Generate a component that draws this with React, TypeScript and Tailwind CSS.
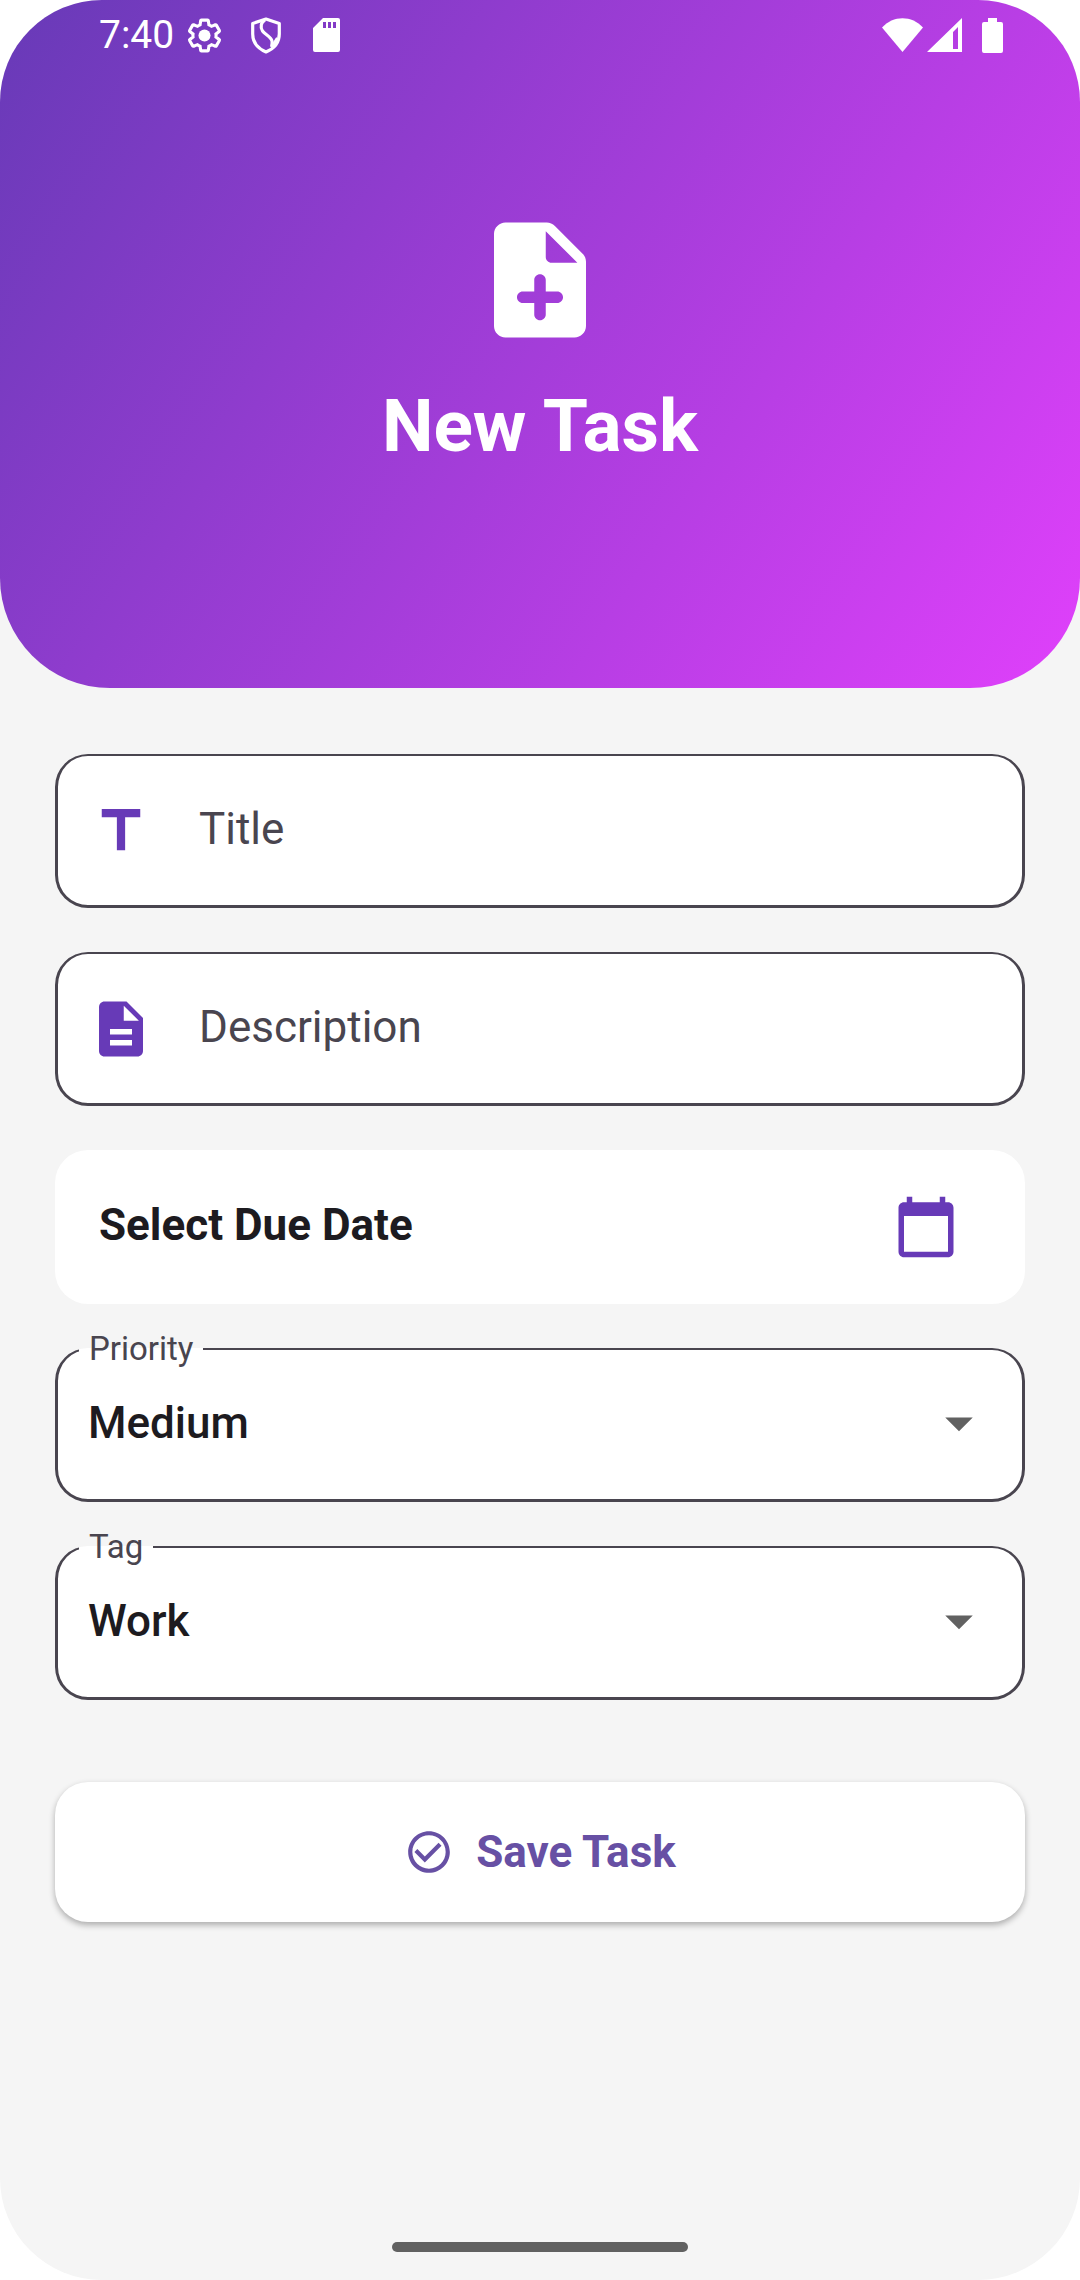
import { useState } from "react";
import type { ReactNode } from "react";

type IconProps = { path: string; className: string };

function Icon({ path, className }: IconProps) {
  return (
    <svg viewBox="0 0 24 24" className={className} fill="currentColor" aria-hidden="true">
      <path d={path} />
    </svg>
  );
}

const icons = {
  noteAdd:
    "M14.59 2.59c-.38-.38-.89-.59-1.42-.59H6c-1.1 0-2 .9-2 2v16c0 1.1.89 2 1.99 2H18c1.1 0 2-.9 2-2V8.83c0-.53-.21-1.04-.59-1.41l-4.82-4.83zM15 16h-2v2c0 .55-.45 1-1 1s-1-.45-1-1v-2H9c-.55 0-1-.45-1-1s.45-1 1-1h2v-2c0-.55.45-1 1-1s1 .45 1 1v2h2c.55 0 1 .45 1 1s-.45 1-1 1zm-2-8V3.5L18.5 9H14c-.55 0-1-.45-1-1z",
  title: "M5 4v3h5.5v12h3V7H19V4z",
  description:
    "M14 2H6c-1.1 0-1.99.9-1.99 2L4 20c0 1.1.89 2 1.99 2H18c1.1 0 2-.9 2-2V8l-6-6zm2 16H8v-2h8v2zm0-4H8v-2h8v2zm-3-5V3.5L18.5 9H13z",
  calendar:
    "M20 3h-1V1h-2v2H7V1H5v2H4c-1.1 0-2 .9-2 2v16c0 1.1.9 2 2 2h16c1.1 0 2-.9 2-2V5c0-1.1-.9-2-2-2zm0 18H4V8h16v13z",
  dropDown: "M7 10l5 5 5-5z",
  check:
    "M16.59 7.58L10 14.17l-3.59-3.58L5 12l5 5 8-8zM12 2C6.48 2 2 6.48 2 12s4.48 10 10 10 10-4.48 10-10S17.52 2 12 2zm0 18c-4.42 0-8-3.58-8-8s3.58-8 8-8 8 3.58 8 8-3.58 8-8 8z",
  gear:
    "M19.43 12.98c.04-.32.07-.64.07-.98s-.03-.66-.07-.98l2.11-1.65c.19-.15.24-.42.12-.64l-2-3.46c-.09-.16-.26-.25-.44-.25-.06 0-.12.01-.17.03l-2.49 1c-.52-.4-1.08-.73-1.69-.98l-.38-2.65C14.46 2.18 14.25 2 14 2h-4c-.25 0-.46.18-.49.42l-.38 2.65c-.61.25-1.17.59-1.69.98l-2.49-1c-.06-.02-.12-.03-.18-.03-.17 0-.34.09-.43.25l-2 3.46c-.13.22-.07.49.12.64l2.11 1.65c-.04.32-.07.65-.07.98s.03.66.07.98l-2.11 1.65c-.19.15-.24.42-.12.64l2 3.46c.09.16.26.25.44.25.06 0 .12-.01.17-.03l2.49-1c.52.4 1.08.73 1.69.98l.38 2.65c.03.24.24.42.49.42h4c.25 0 .46-.18.49-.42l.38-2.65c.61-.25 1.17-.59 1.69-.98l2.49 1c.06.02.12.03.18.03.17 0 .34-.09.43-.25l2-3.46c.12-.22.07-.49-.12-.64l-2.11-1.65z",
};

function StatusBar() {
  return (
    <div className="flex h-[70px] items-center justify-between pr-[77px] pl-[99px]">
      <div className="flex items-center">
        <span className="text-[39px] leading-[48px]">7:40</span>
        <svg viewBox="0 0 24 24" className="ml-3 size-[37px] overflow-visible" aria-hidden="true">
          <path d={icons.gear} fill="none" stroke="currentColor" strokeWidth="2" />
          <circle cx="12" cy="12" r="3.9" fill="currentColor" />
        </svg>
        <svg viewBox="0 0 30 37" className="ml-7 h-[37px] w-[30px]" fill="none" stroke="currentColor" strokeWidth="3.2" strokeLinejoin="round" aria-hidden="true">
          <path d="M15 2 28.300 6.500V17C28.300 26 22 32 15 35 8 32 1.700 26 1.700 17V6.500Z" />
          <path d="M14 3C10 5 9 10 11.500 14 14 17.500 20 19.500 21 24 21.500 26.500 21 28 20.500 30" />
          <path d="M26.500 21 21.500 29" />
        </svg>
        <svg viewBox="0 0 27 34" className="ml-8 h-[34px] w-[27px]" fill="currentColor" fillRule="evenodd" aria-hidden="true">
          <path d="M10 0H25a2 2 0 0 1 2 2V32a2 2 0 0 1-2 2H2a2 2 0 0 1-2-2V10ZM10 4v6h3V4ZM15 4v6h3V4ZM20 4v6h3V4Z" />
        </svg>
      </div>
      <div className="flex items-center">
        <svg viewBox="0 0 41 34" className="h-[34px] w-[41px]" fill="currentColor" aria-hidden="true">
          <path d="M0 9.500C11 -3 30 -3 41 9.500L20.500 34Z" />
        </svg>
        <svg viewBox="0 0 35 34" className="ml-1 h-[34px] w-[35px]" fill="currentColor" fillRule="evenodd" aria-hidden="true">
          <path d="M35 0V34H0ZM31 9 26 14V31H31Z" />
        </svg>
        <svg viewBox="0 0 21 35" className="ml-5 h-[35px] w-[21px]" fill="currentColor" aria-hidden="true">
          <path d="M6 0h9v4h4a2 2 0 0 1 2 2V33a2 2 0 0 1-2 2H2a2 2 0 0 1-2-2V6a2 2 0 0 1 2-2H6Z" />
        </svg>
      </div>
    </div>
  );
}

function TextField({ id, label, icon }: { id: string; label: string; icon: string }) {
  return (
    <div className="flex h-[154px] items-center gap-[45px] rounded-[33px] border-[3px] border-t-2 border-[#49454f] bg-white px-[30px]">
      <Icon path={icon} className="size-[66px] shrink-0 text-[#673ab7]" />
      <div className="grid flex-1 items-center pb-1 text-[44px] leading-[52px]">
        <input
          id={id}
          type="text"
          placeholder=" "
          className="peer col-start-1 row-start-1 w-full min-w-0 bg-transparent text-[#1d1b20] outline-none"
        />
        <label
          htmlFor={id}
          className="invisible col-start-1 row-start-1 cursor-text text-[#49454f] peer-placeholder-shown:visible"
        >
          {label}
        </label>
      </div>
    </div>
  );
}

type SelectFieldProps = {
  id: string;
  label: string;
  value: string;
  onChange: (value: string) => void;
  children: ReactNode;
};

function SelectField({ id, label, value, onChange, children }: SelectFieldProps) {
  return (
    <fieldset className="relative -mt-[18px] h-[172px] min-w-0 rounded-[33px] border-[3px] border-t-2 border-[#49454f] bg-white">
      <legend className="ml-[21px] px-[10px] text-[33px] leading-[38px] text-[#49454f]">
        <label htmlFor={id}>{label}</label>
      </legend>
      <select
        id={id}
        value={value}
        onChange={(event) => onChange(event.target.value)}
        className="h-[110px] w-full appearance-none bg-transparent pr-[96px] pl-[30px] text-[44px] font-medium text-[#1d1b20] outline-none"
      >
        {children}
      </select>
      <Icon
        path={icons.dropDown}
        className="pointer-events-none absolute right-[30px] bottom-[22px] size-[66px] text-[#616161]"
      />
    </fieldset>
  );
}

export default function App() {
  const [priority, setPriority] = useState("Medium");
  const [tag, setTag] = useState("Work");

  return (
    <div className="bg-white font-['Roboto',sans-serif]">
      <div className="flex min-h-screen flex-col overflow-hidden rounded-[102px] bg-[#f5f5f5]">
        <header className="rounded-b-[110px] bg-[linear-gradient(122.5deg,#673ab7,#e040fb)] pb-[220px] text-white">
          <StatusBar />
          <div className="flex flex-col items-center pt-[141px]">
            <Icon path={icons.noteAdd} className="size-[138px]" />
            <h1 className="mt-[35px] text-[73px] leading-[84px] font-bold">New Task</h1>
          </div>
        </header>

        <main className="flex-1 px-[55px] pt-[66px]">
          <form className="flex flex-col gap-11" onSubmit={(event) => event.preventDefault()}>
            <TextField id="title" label="Title" icon={icons.title} />
            <TextField id="description" label="Description" icon={icons.description} />
            <button
              type="button"
              className="flex h-[154px] items-center justify-between rounded-[33px] bg-white pr-[66px] pl-11 text-[44px] font-bold text-[#1d1b20]"
            >
              <span className="pb-1">Select Due Date</span>
              <Icon path={icons.calendar} className="size-[66px] text-[#673ab7]" />
            </button>
            <SelectField id="priority" label="Priority" value={priority} onChange={setPriority}>
              <option>Low</option>
              <option>Medium</option>
              <option>High</option>
            </SelectField>
            <SelectField id="tag" label="Tag" value={tag} onChange={setTag}>
              <option>Work</option>
              <option>Personal</option>
              <option>Study</option>
            </SelectField>
            <button
              type="submit"
              className="mt-[38px] flex h-[140px] items-center justify-center gap-[22px] rounded-[33px] bg-white text-[44px] font-bold text-[#6750a4] shadow-[0_3px_6px_rgba(0,0,0,0.3)]"
            >
              <Icon path={icons.check} className="size-[50px]" />
              Save Task
            </button>
          </form>
        </main>

        <div className="mx-auto mb-7 h-[10px] w-[296px] rounded-full bg-[#616161]" />
      </div>
    </div>
  );
}
